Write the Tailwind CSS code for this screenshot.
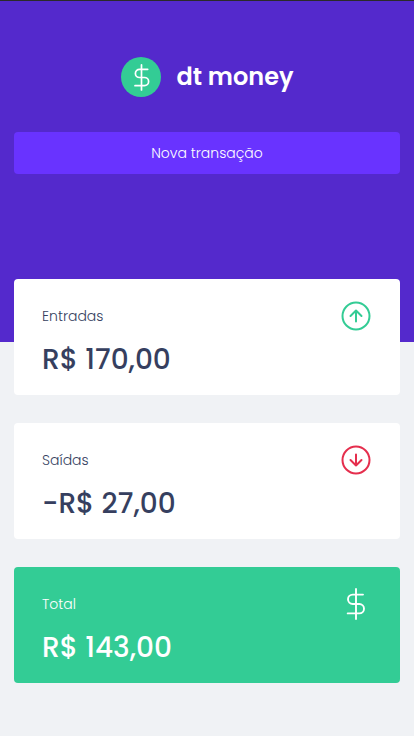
<!DOCTYPE html>
<html lang="pt-BR">
<head>
<meta charset="utf-8">
<meta name="viewport" content="width=device-width, initial-scale=1">
<title>dt money</title>
<script src="https://cdn.jsdelivr.net/npm/@tailwindcss/browser@4"></script>
</head>
<body class="min-h-screen bg-[#f0f2f5] font-[Poppins,Inter,sans-serif] text-[#363f5f] antialiased">
<header class="border-t border-[#2a2a2a] bg-[#5429cc] px-[14px] pt-14 pb-[168px]">
  <div class="flex items-center justify-center gap-4">
    <svg class="size-10" viewBox="0 0 40 40" fill="none" aria-hidden="true">
      <circle cx="20" cy="20" r="20" fill="#33cc95"/>
      <path d="M20.500 7.800v25.200M26.700 12.300h-8.200a4.100 4.100 0 0 0 0 8.200h5a4.100 4.100 0 0 1 0 8.200H14" stroke="#fff" stroke-width="1.700" stroke-linecap="round" stroke-linejoin="round"/>
    </svg>
    <h1 class="text-2xl leading-10 font-semibold text-white">dt money</h1>
  </div>
  <button type="button" class="mt-[35px] h-[42px] w-full rounded bg-[#6933ff] text-sm font-light text-white">Nova transação</button>
</header>
<main class="-mt-[63px] flex flex-col gap-7 px-[14px] pb-7">
  <section class="rounded bg-white px-7 py-[21px]">
    <div class="flex items-center justify-between">
      <h2 class="text-sm font-light">Entradas</h2>
      <svg class="size-8" viewBox="0 0 32 32" fill="none" stroke="#33cc95" stroke-width="2" stroke-linecap="round" stroke-linejoin="round" aria-hidden="true">
        <circle cx="16" cy="16" r="13.500"/><path d="M16 21.500v-11M10.500 16l5.500-5.500 5.500 5.500"/>
      </svg>
    </div>
    <strong class="mt-[14px] block text-[28px] leading-7 font-medium">R$ 170,00</strong>
  </section>
  <section class="rounded bg-white px-7 py-[21px]">
    <div class="flex items-center justify-between">
      <h2 class="text-sm font-light">Saídas</h2>
      <svg class="size-8" viewBox="0 0 32 32" fill="none" stroke="#e52e4d" stroke-width="2" stroke-linecap="round" stroke-linejoin="round" aria-hidden="true">
        <circle cx="16" cy="16" r="13.500"/><path d="M16 10.500v11M10.500 16l5.500 5.500 5.500-5.500"/>
      </svg>
    </div>
    <strong class="mt-[14px] block text-[28px] leading-7 font-medium">-R$ 27,00</strong>
  </section>
  <section class="rounded bg-[#33cc95] px-7 py-[21px] text-white">
    <div class="flex items-center justify-between">
      <h2 class="text-sm font-light">Total</h2>
      <svg class="size-8" viewBox="0 0 32 32" fill="none" stroke="#fff" stroke-width="1.900" stroke-linecap="round" stroke-linejoin="round" aria-hidden="true">
        <path d="M16 1v30M23 6.600h-10.300a4.700 4.700 0 0 0 0 9.400h6.600a4.700 4.700 0 0 1 0 9.400H7.700"/>
      </svg>
    </div>
    <strong class="mt-[14px] block text-[28px] leading-7 font-medium">R$ 143,00</strong>
  </section>
</main>
</body>
</html>
